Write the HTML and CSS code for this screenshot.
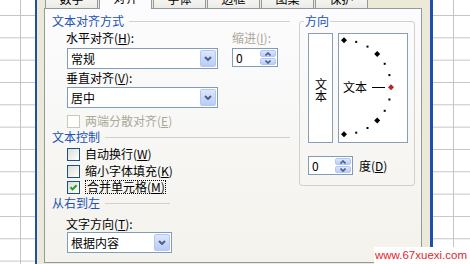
FILE: index.html
```html
<!DOCTYPE html>
<html lang="zh-CN">
<head>
<meta charset="utf-8">
<title>设置单元格格式 - 对齐</title>
<link rel="stylesheet" href="styles.css">
</head>
<body>
<div class="screen">
  <div class="sheet sheet-left"></div>
  <div class="dialog">
    <div class="tabs">
      <div class="tab">数字</div>
      <div class="tab active">对齐</div>
      <div class="tab">字体</div>
      <div class="tab">边框</div>
      <div class="tab">图案</div>
      <div class="tab">保护</div>
    </div>
    <div class="pane">
      <div class="col-left">
        <div class="legend mt6">文本对齐方式</div>
        <div class="lbl-row mt5">
          <span class="lbl-h">水平对齐(<u>H</u>):</span>
          <span class="dis">缩进(<u>I</u>):</span>
        </div>
        <div class="sel-row mt4">
          <div class="select sel-151"><span class="val">常规</span><span class="ddbtn"><svg width="8" height="5" viewBox="0 0 8 5"><polyline points="1,1 4,4 7,1" fill="none" stroke="#4d6185" stroke-width="2"/></svg></span></div>
          <div class="spin spin-46"><span class="val">0</span><span class="spin-btns"><span class="sb"><svg width="6" height="4" viewBox="0 0 6 4"><polyline points="0.5,3.5 3,1 5.5,3.5" fill="none" stroke="#4d6185" stroke-width="1.6"/></svg></span><span class="sb"><svg width="6" height="4" viewBox="0 0 6 4"><polyline points="0.5,0.5 3,3 5.5,0.5" fill="none" stroke="#4d6185" stroke-width="1.6"/></svg></span></span></div>
        </div>
        <div class="lbl mt3">垂直对齐(<u>V</u>):</div>
        <div class="select sel-151 ind mt3"><span class="val">居中</span><span class="ddbtn"><svg width="8" height="5" viewBox="0 0 8 5"><polyline points="1,1 4,4 7,1" fill="none" stroke="#4d6185" stroke-width="2"/></svg></span></div>
        <div class="check dis mt6"><span class="box"></span><span>两端分散对齐(<u>E</u>)</span></div>
        <div class="legend mt3">文本控制</div>
        <div class="check mt4"><span class="box"></span><span>自动换行(<u>W</u>)</span></div>
        <div class="check mt3"><span class="box"></span><span>缩小字体填充(<u>K</u>)</span></div>
        <div class="check mt2"><span class="box"><svg width="9" height="9" viewBox="0 0 9 9"><polyline points="1.5,4.2 3.6,6.4 7.6,2.2" fill="none" stroke="#21a121" stroke-width="2"/></svg></span><span class="focus">合并单元格(<u>M</u>)</span></div>
        <div class="legend legend-short mt3">从右到左</div>
        <div class="lbl mt9">文字方向(<u>T</u>):</div>
        <div class="select sel-105 ind mt2"><span class="val">根据内容</span><span class="ddbtn"><svg width="8" height="5" viewBox="0 0 8 5"><polyline points="1,1 4,4 7,1" fill="none" stroke="#4d6185" stroke-width="2"/></svg></span></div>
      </div>
      <fieldset class="group">
        <legend>方向</legend>
        <div class="orient">
          <div class="vbox"><span class="vtext">文本</span></div>
          <div class="dial">
            <svg width="68" height="108" viewBox="0 0 68 108">
              <text x="4" y="58" font-family="Noto Sans CJK SC, sans-serif" font-size="12" fill="#000">文本</text>
              <line x1="33" y1="53.5" x2="46" y2="53.5" stroke="#000" stroke-width="1"/>
              <g fill="#000">
                <path d="M5 3.3 L8 6.3 L5 9.3 L2 6.3Z"/>
                <rect x="16.2" y="6.9" width="2" height="2"/>
                <rect x="27.5" y="11.6" width="2" height="2"/>
                <path d="M38.2 17.1 L41.2 20.1 L38.2 23.1 L35.2 20.1Z"/>
                <rect x="44.7" y="28.8" width="2" height="2"/>
                <rect x="49.4" y="40.1" width="2" height="2"/>
                <rect x="49.4" y="64.5" width="2" height="2"/>
                <rect x="44.7" y="75.8" width="2" height="2"/>
                <path d="M38.2 83.5 L41.2 86.5 L38.2 89.5 L35.2 86.5Z"/>
                <rect x="27.5" y="93" width="2" height="2"/>
                <rect x="16.2" y="97.7" width="2" height="2"/>
                <path d="M5 97.3 L8 100.3 L5 103.3 L2 100.3Z"/>
              </g>
              <path d="M52 50.3 L55 53.3 L52 56.3 L49 53.3Z" fill="#b3262a"/>
            </svg>
          </div>
        </div>
        <div class="deg-row">
          <div class="spin spin-45"><span class="val">0</span><span class="spin-btns"><span class="sb"><svg width="6" height="4" viewBox="0 0 6 4"><polyline points="0.5,3.5 3,1 5.5,3.5" fill="none" stroke="#4d6185" stroke-width="1.6"/></svg></span><span class="sb"><svg width="6" height="4" viewBox="0 0 6 4"><polyline points="0.5,0.5 3,3 5.5,0.5" fill="none" stroke="#4d6185" stroke-width="1.6"/></svg></span></span></div>
          <span class="deg">度(<u>D</u>)</span>
        </div>
      </fieldset>
    </div>
  </div>
  <div class="sheet sheet-right"></div>
  <div class="watermark">www.67xuexi.com</div>
</div>
</body>
</html>
```

FILE: styles.css
```css
* { box-sizing: border-box; }
html, body { margin: 0; padding: 0; }
body {
  width: 470px;
  height: 264px;
  overflow: hidden;
  background: #fff;
  color: #000;
  font-family: "Noto Sans CJK SC", "Noto Sans", sans-serif;
  font-size: 12px;
  line-height: 12px;
}
u { text-decoration: underline; text-underline-offset: 1px; }

.screen { display: flex; height: 264px; position: relative; overflow: hidden; }

.sheet {
  background-color: #fff;
  background-image:
    linear-gradient(to right, transparent 20px, #c4c4c4 20px, #c4c4c4 21px, transparent 21px),
    linear-gradient(#c4c4c4 1px, transparent 1px);
  background-size: 100% 100%, 100% 22.33px;
  background-position: 0 0, 0 15px;
  background-repeat: no-repeat, repeat;
}
.sheet-left { width: 35px; flex: none; }
.sheet-right { flex: 1; }

.dialog {
  flex: none;
  width: 398px;
  height: 278px;
  margin-top: -12px;
  background: #ece9d8;
  border-left: 2px solid #1f4fae;
  border-right: 3px solid #1f4fae;
  padding: 0 8px 0 7px;
  display: flex;
  flex-direction: column;
}

.tabs {
  display: flex;
  align-items: flex-end;
  height: 20px;
  padding-left: 1px;
  gap: 1px;
  position: relative;
  z-index: 1;
  flex: none;
}
.tab {
  width: 53px;
  height: 19px;
  border: 1px solid #919b9c;
  border-bottom: none;
  border-radius: 3px 3px 0 0;
  background: linear-gradient(#ffffff, #ecebe6);
  text-align: center;
  line-height: 17px;
}
.tab.active {
  height: 21px;
  margin-bottom: -1px;
  background: #fcfcfe;
  line-height: 18px;
}

.pane {
  flex: none;
  height: 255px;
  border: 1px solid #919b9c;
  background: linear-gradient(#fcfcfe, #f3f2ec);
  display: flex;
}

.col-left {
  flex: none;
  width: 254px;
  padding-left: 7px;
  display: flex;
  flex-direction: column;
  align-items: flex-start;
}

.mt1 { margin-top: 1px; }
.mt2 { margin-top: 2px; }
.mt3 { margin-top: 3px; }
.mt4 { margin-top: 4px; }
.mt5 { margin-top: 5px; }
.mt6 { margin-top: 6px; }
.mt9 { margin-top: 9px; }

.legend {
  display: flex;
  align-items: center;
  height: 12px;
  width: 238px;
  color: #2151b2;
  white-space: nowrap;
}
.legend::after {
  content: "";
  flex: 1;
  height: 1px;
  background: #d3d0c4;
  margin-left: 5px;
}
.legend-short { width: 118px; }

.lbl { margin-left: 14px; height: 12px; white-space: nowrap; }
.lbl-row { display: flex; margin-left: 14px; height: 12px; white-space: nowrap; }
.lbl-h { width: 166px; }
.dis { color: #aca899; }

.ind { margin-left: 15px; }
.sel-row { display: flex; align-items: flex-start; gap: 14px; margin-left: 15px; }

.select {
  display: flex;
  height: 21px;
  border: 1px solid #7f9db9;
  background: #fff;
  padding: 1px;
}
.sel-151 { width: 151px; }
.sel-105 { width: 105px; }
.select .val { flex: 1; padding-left: 2px; line-height: 17px; white-space: nowrap; }
.ddbtn {
  width: 16px;
  height: 17px;
  border: 1px solid #b4c7f2;
  border-radius: 2px;
  background: linear-gradient(#dde7fd, #b8ccf8);
  display: flex;
  align-items: center;
  justify-content: center;
}

.spin {
  display: flex;
  height: 19px;
  border: 1px solid #7f9db9;
  background: #fff;
  padding: 1px;
}
.spin-46 { width: 46px; }
.spin-45 { width: 45px; }
.spin .val { flex: 1; padding-left: 2px; line-height: 15px; }
.spin-btns { width: 16px; display: flex; flex-direction: column; gap: 1px; }
.sb {
  flex: 1;
  border: 1px solid #b4c7f2;
  border-radius: 2px;
  background: linear-gradient(#dde7fd, #b8ccf8);
  display: flex;
  align-items: center;
  justify-content: center;
}

.check {
  display: flex;
  align-items: center;
  height: 14px;
  margin-left: 15px;
  white-space: nowrap;
}
.box {
  flex: none;
  width: 13px;
  height: 13px;
  margin-right: 5px;
  border: 1px solid #1c5180;
  background: linear-gradient(135deg, #dcdcd7, #ffffff);
  display: flex;
  align-items: center;
  justify-content: center;
}
.check.dis .box { border-color: #cac8bb; background: #fff; }
.focus { border: 1px dotted #000; padding: 0 0 0 1px; line-height: 12px; }

.group {
  flex: none;
  width: 116px;
  height: 171px;
  margin: 6px 0 0 0;
  padding: 6px 0 0 8px;
  border: 1px solid #d3d0c4;
  border-radius: 3px;
  min-width: 0;
}
.group legend {
  padding: 0 1px;
  margin-left: -4px;
  color: #2151b2;
  font-size: 12px;
  line-height: 12px;
}
.orient { display: flex; gap: 5px; }
.vbox {
  width: 25px;
  height: 110px;
  border: 1px solid #8a9db5;
  background: #fff;
  display: flex;
  align-items: center;
  justify-content: center;
  padding-top: 3px;
}
.vtext { writing-mode: vertical-rl; text-orientation: upright; line-height: 12px; }
.dial {
  width: 70px;
  height: 110px;
  border: 1px solid #8a9db5;
  background: #fff;
}
.dial svg { display: block; }
.deg-row { display: flex; align-items: center; margin-top: 13px; }
.deg { margin-left: 6px; white-space: nowrap; }

.watermark {
  position: absolute;
  right: 0;
  bottom: 0;
  width: 96px;
  height: 17px;
  background: #fff;
  color: #e1262c;
  font-family: "Liberation Sans", Arial, sans-serif;
  font-size: 11.5px;
  line-height: 17px;
  padding-left: 1px;
  white-space: nowrap;
  overflow: hidden;
}
```
